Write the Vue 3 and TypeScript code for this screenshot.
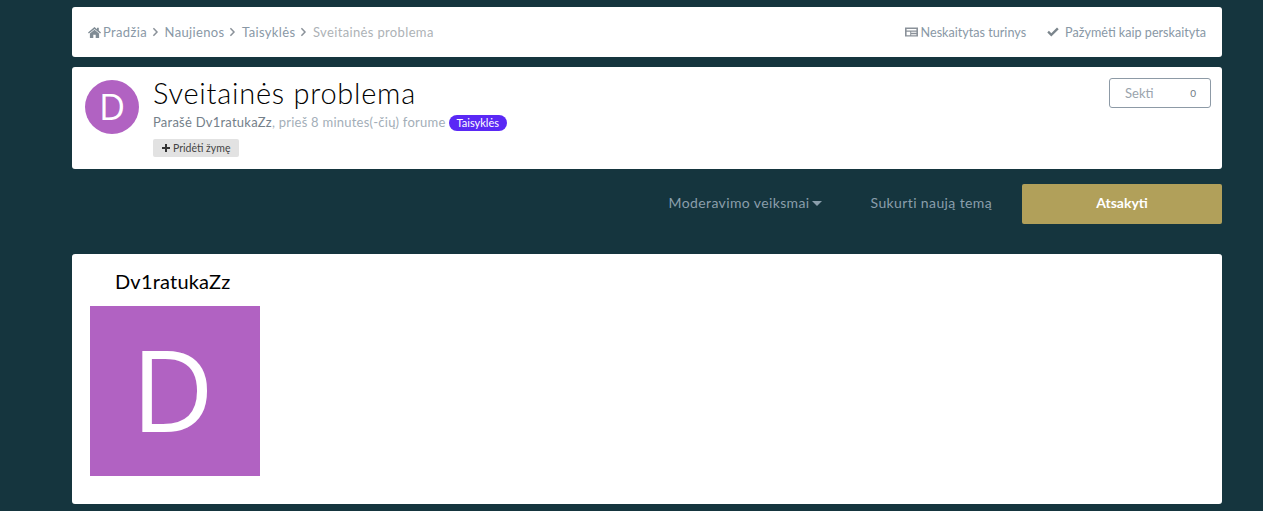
<template>
<div class="page">
    <div class="card crumbs">
        <div class="trail">
            <svg class="home" viewBox="0 0 13 11"><path d="M6.5 0 0 5.4l.9 1.1L6.5 1.9l5.6 4.6.9-1.1-2.2-1.8V.7H9v1.5zM1.9 6.6V11h3.4V7.7h2.4V11h3.4V6.6L6.5 2.8z"/></svg>
            <template v-for="item in trail" :key="item">
                <a class="link">{{ item }}</a>
                <svg class="sep" viewBox="0 0 7 10"><path d="M1.4 1.2 5 5 1.4 8.8" fill="none" stroke="currentColor" stroke-width="1.5"/></svg>
            </template>
            <span class="current">Sveitainės problema</span>
        </div>
        <div class="quick">
            <a class="link">
                <svg class="news" viewBox="0 0 13 10"><path fill-rule="evenodd" d="M0 .6h13v9H0zM1.6 2v1.6h9.8V2zM1.6 4.8v3.4h3.6V4.8zM6.2 4.8v.9h5.2v-.9zM6.2 7.2v1h5.2v-1z"/></svg>
                Neskaitytas turinys
            </a>
            <a class="link">
                <svg class="check" viewBox="0 0 12 10"><path d="M4.3 9.4.3 5.4l1.6-1.6 2.4 2.4L10 .6l1.7 1.6z"/></svg>
                Pažymėti kaip perskaityta
            </a>
        </div>
    </div>

    <div class="card topic">
        <div class="avatar">D</div>
        <div class="info">
            <h1>Sveitainės problema</h1>
            <p class="meta">
                <span class="author">Parašė Dv1ratukaZz</span>, prieš 8 minutes(-čių) forume
                <span class="badge">Taisyklės</span>
            </p>
            <button class="tag">
                <svg viewBox="0 0 8 8"><path d="M3 0h2v3h3v2H5v3H3V5H0V3h3z"/></svg>
                Pridėti žymę
            </button>
        </div>
        <button class="follow"><span>Sekti</span><span class="count">0</span></button>
    </div>

    <div class="actions">
        <a class="action moderate">Moderavimo veiksmai<i class="caret"></i></a>
        <a class="action">Sukurti naują temą</a>
        <button class="reply">Atsakyti</button>
    </div>

    <div class="card post">
        <h3 class="username">Dv1ratukaZz</h3>
        <div class="photo">D</div>
    </div>
</div>
</template>
<script setup lang="ts">
const trail: string[] = ['Pradžia', 'Naujienos', 'Taisyklės'];
</script>
<style>
html, body {
    background: #15353e;
}
</style>
<style scoped>
.page {
    width: 1150px;
    margin-left: 72px;
    padding-top: 7px;
    font-family: Lato, "Open Sans", sans-serif;
    font-size: 13px;
    color: #8a99a6;
}
.card {
    background: #fff;
    border-radius: 3px;
    box-sizing: border-box;
}
.crumbs {
    height: 50px;
    padding: 0 16px;
    display: flex;
    justify-content: space-between;
    align-items: center;
}
.trail, .quick {
    display: flex;
    align-items: center;
}
.trail {
    letter-spacing: .35px;
}
.link {
    color: #8998a6;
}
.home {
    width: 13px;
    height: 11px;
    fill: #7f8b94;
    margin-right: 2px;
}
.sep {
    width: 7px;
    height: 10px;
    margin: 0 6px 0 4.6px;
    color: #8a9199;
}
.current {
    color: #adb2b6;
}
.quick {
    font-size: 12.6px;
}
.quick .link {
    display: flex;
    align-items: center;
}
.quick .link + .link {
    margin-left: 21px;
}
.news {
    width: 13px;
    height: 10px;
    fill: #8a9199;
    margin-right: 3px;
}
.check {
    width: 12px;
    height: 10px;
    fill: #7b858c;
    margin-right: 6px;
}
.topic {
    margin-top: 10px;
    height: 102px;
    padding: 13px 11px 0 13px;
    display: flex;
    align-items: flex-start;
}
.avatar {
    width: 54px;
    height: 54px;
    border-radius: 50%;
    background: #b162c2;
    color: #fff;
    font-family: "Open Sans", sans-serif;
    font-size: 36px;
    line-height: 54px;
    text-align: center;
    flex: none;
}
.info {
    margin-left: 14px;
    flex: 1;
}
h1 {
    margin: -2px 0 2px;
    font-size: 29px;
    font-weight: 300;
    letter-spacing: .75px;
    line-height: 30px;
    color: #000;
}
.meta {
    margin: 5px 0 0;
    line-height: 18px;
    letter-spacing: .24px;
    color: #a3aeb8;
}
.author {
    color: #74808a;
}
.badge {
    display: inline-block;
    padding: 0 7.5px;
    border-radius: 9px;
    background: #5a28f5;
    color: #fff;
    font-size: 11px;
    letter-spacing: 0;
    line-height: 16px;
}
.tag {
    display: flex;
    align-items: center;
    gap: 3px;
    margin-top: 8px;
    height: 18px;
    padding: 0 9px;
    border: 0;
    border-radius: 2px;
    background: #e2e2e2;
    color: #444;
    font: inherit;
    font-size: 10.5px;
}
.tag svg {
    width: 8px;
    height: 8px;
    fill: #333;
}
.follow {
    width: 102px;
    height: 30px;
    margin-top: -2px;
    padding: 0 14px 0 15px;
    display: flex;
    justify-content: space-between;
    align-items: center;
    background: #fff;
    border: 1px solid #8d9aa6;
    border-radius: 3px;
    color: #9aa4ad;
    font: inherit;
    font-size: 13px;
}
.count {
    font-size: 10px;
    color: #6f7a84;
}
.actions {
    margin-top: 15px;
    height: 40px;
    display: flex;
    justify-content: flex-end;
    align-items: center;
}
.action {
    color: #8a9eab;
    font-size: 14px;
    letter-spacing: .38px;
    margin-right: 30px;
    padding-bottom: 3px;
}
.moderate {
    margin-right: 49px;
}
.caret {
    display: inline-block;
    margin-left: 2px;
    vertical-align: 2px;
    border: 5px solid transparent;
    border-top-color: #8a9eab;
    border-bottom: 0;
}
.reply {
    width: 200px;
    height: 40px;
    padding: 0 0 3px;
    border: 0;
    border-radius: 2px;
    background: #b1a05a;
    color: #fff;
    font: inherit;
    font-size: 14px;
    font-weight: 700;
}
.post {
    margin-top: 30px;
    height: 250px;
    padding: 13px 18px 0;
}
.username {
    margin: 0 0 11px 25px;
    font-size: 20px;
    font-weight: 400;
    letter-spacing: .2px;
    line-height: 28px;
    color: #000;
}
.photo {
    width: 170px;
    height: 170px;
    background: #b162c2;
    color: #fff;
    font-family: "Open Sans", sans-serif;
    font-size: 114px;
    line-height: 164px;
    text-indent: -5px;
    text-align: center;
}
</style>
